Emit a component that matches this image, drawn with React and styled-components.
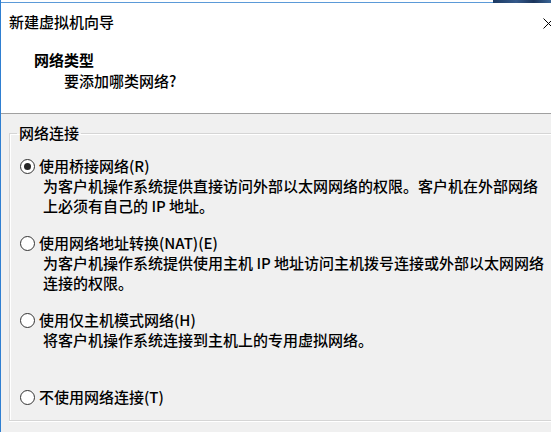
import React from "react";
import styled, { createGlobalStyle } from "styled-components";

const GlobalStyle = createGlobalStyle`
  html, body {
    margin: 0;
    padding: 0;
    background: #f0f0f0;
  }
  body {
    font-family: "Noto Sans CJK SC", "Noto Sans", sans-serif;
    font-size: 15px;
    font-weight: 500;
    color: #000;
  }
`;

const Window = styled.div`
  width: 551px;
  height: 432px;
  box-sizing: border-box;
  border-left: 1px solid #2f7fd1;
  background: #f0f0f0;
  display: flex;
  flex-direction: column;
  overflow: hidden;
`;

const TopEdge = styled.div`
  display: flex;
  height: 3px;
  flex-shrink: 0;
`;

const EdgeLine = styled.div`
  flex: 1;
  background: #fff;
  border-bottom: 1px solid #5b9ad8;
`;

const Desktop = styled.div`
  width: 58px;
  background: linear-gradient(90deg, #1c3a63, #34598a 40%, #1b355c 70%, #3a6596);
`;

const TitleBar = styled.div`
  display: flex;
  align-items: center;
  justify-content: space-between;
  height: 20px;
  padding: 9px 0 6px 8px;
  background: #fff;
  line-height: 20px;
  flex-shrink: 0;
`;

const CloseIcon = styled.svg`
  display: block;
  width: 11px;
  height: 11px;
  margin: 2px -3px 0 0;
  flex-shrink: 0;
`;

const Header = styled.div`
  background: #fff;
  padding: 12px 0 22px 33px;
  border-bottom: 1px solid #a0a0a0;
  flex-shrink: 0;
`;

const Heading = styled.div`
  font-weight: 700;
  line-height: 20px;
`;

const SubHeading = styled.div`
  margin: 1px 0 0 30px;
  line-height: 20px;
`;

const Body = styled.div`
  padding: 9px 0 0 8px;
`;

const GroupBox = styled.fieldset`
  margin: 0;
  padding: 0 0 13px 0;
  min-width: 0;
  width: calc(100% + 20px);
  box-sizing: border-box;
  border: 1px solid #d5d5d5;
  box-shadow: inset 1px 1px 0 #fff, 0 1px 0 #fff;
`;

const Legend = styled.legend`
  margin-left: 7px;
  padding: 0 2px;
  line-height: 20px;
`;

const OptionList = styled.div`
  padding: 13px 0 0 10px;
  display: flex;
  flex-direction: column;
`;

const Option = styled.div`
  min-height: ${(p) => (p.$last ? "0" : "77px")};
`;

const OptionRow = styled.label`
  display: flex;
  align-items: center;
  gap: 4px;
  line-height: 20px;
  white-space: nowrap;
`;

const Radio = styled.span`
  width: 15px;
  height: 15px;
  box-sizing: border-box;
  border: 1px solid #333;
  border-radius: 50%;
  background: #fff;
  display: flex;
  align-items: center;
  justify-content: center;
  flex-shrink: 0;

  &::after {
    content: "";
    width: 7px;
    height: 7px;
    border-radius: 50%;
    background: ${(p) => (p.$checked ? "#262626" : "transparent")};
  }
`;

const Desc = styled.div`
  padding-left: 23px;
  line-height: 20px;
  white-space: nowrap;
`;

const options = [
  {
    label: "使用桥接网络(R)",
    lines: [
      "为客户机操作系统提供直接访问外部以太网网络的权限。客户机在外部网络",
      "上必须有自己的 IP 地址。",
    ],
    checked: true,
  },
  {
    label: "使用网络地址转换(NAT)(E)",
    lines: [
      "为客户机操作系统提供使用主机 IP 地址访问主机拨号连接或外部以太网网络",
      "连接的权限。",
    ],
  },
  {
    label: "使用仅主机模式网络(H)",
    lines: ["将客户机操作系统连接到主机上的专用虚拟网络。"],
  },
  {
    label: "不使用网络连接(T)",
    lines: [],
  },
];

export default function App() {
  return (
    <>
      <GlobalStyle />
      <Window>
        <TopEdge>
          <EdgeLine />
          <Desktop />
        </TopEdge>

        <TitleBar>
          <span>新建虚拟机向导</span>
          <CloseIcon viewBox="0 0 11 11">
            <path d="M0.5 0.5 L10.5 10.5 M10.5 0.5 L0.5 10.5" stroke="#000" strokeWidth="1" fill="none" />
          </CloseIcon>
        </TitleBar>

        <Header>
          <Heading>网络类型</Heading>
          <SubHeading>要添加哪类网络?</SubHeading>
        </Header>

        <Body>
          <GroupBox>
            <Legend>网络连接</Legend>
            <OptionList>
              {options.map((o, i) => (
                <Option key={o.label} $last={i === options.length - 1}>
                  <OptionRow>
                    <Radio $checked={o.checked} />
                    {o.label}
                  </OptionRow>
                  {o.lines.map((l) => (
                    <Desc key={l}>{l}</Desc>
                  ))}
                </Option>
              ))}
            </OptionList>
          </GroupBox>
        </Body>
      </Window>
    </>
  );
}
